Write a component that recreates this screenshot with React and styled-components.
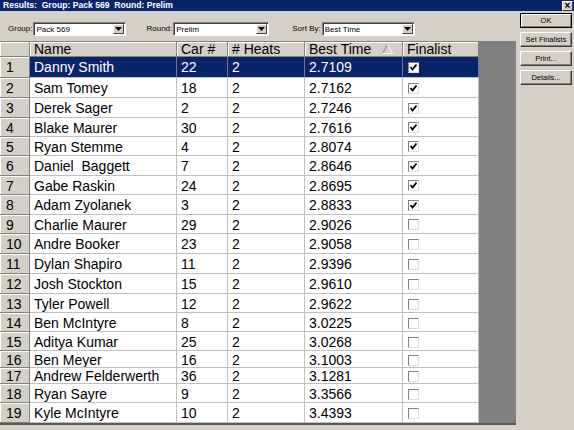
import React from "react";
import styled, { createGlobalStyle } from "styled-components";

const GlobalStyle = createGlobalStyle`
  html, body { margin: 0; padding: 0; background: #d4d0c8; }
  body { font-family: "Liberation Sans", Arial, sans-serif; }
  * { box-sizing: border-box; }
`;

const Window = styled.div`
  width: 574px;
  height: 430px;
  display: flex;
  flex-direction: column;
  background: #d4d0c8;
  overflow: hidden;
`;

const TitleBar = styled.div`
  height: 11px;
  background: #0a246a;
  color: #fff;
  display: flex;
  align-items: center;
  justify-content: space-between;
  padding: 0 1px 0 3px;
`;

const TitleText = styled.span`
  font-weight: bold;
  font-size: 8.6px;
  line-height: 11px;
  white-space: pre;
`;

const CloseBtn = styled.div`
  width: 11px;
  height: 10px;
  background: #d4d0c8;
  border: 1px solid;
  border-color: #fff #404040 #404040 #fff;
  color: #000;
  font-size: 10px;
  font-weight: bold;
  line-height: 7px;
  text-align: center;
`;

const Body = styled.div`
  flex: 1;
  display: flex;
  min-height: 0;
`;

const Main = styled.div`
  width: 516px;
  display: flex;
  flex-direction: column;
`;

const Toolbar = styled.div`
  height: 30px;
  display: flex;
  align-items: flex-start;
  padding: 11px 0 0 8px;
`;

const Field = styled.div`
  display: flex;
  align-items: center;
  margin-right: ${(p) => p.$gap}px;
`;

const Label = styled.span`
  font-size: 8px;
  color: #000;
  margin-right: 1px;
  line-height: 14px;
`;

const Combo = styled.div`
  width: ${(p) => p.$w}px;
  height: 14px;
  background: #fff;
  border: 1px solid;
  border-color: #808080 #fff #fff #808080;
  box-shadow: inset 1px 1px 0 #404040;
  display: flex;
  align-items: center;
  justify-content: space-between;
  padding: 1px 1px 1px 2px;
`;

const ComboText = styled.span`
  font-size: 8px;
  line-height: 11px;
  color: #000;
`;

const ComboArrow = styled.div`
  width: 11px;
  height: 10px;
  background: #d4d0c8;
  border: 1px solid;
  border-color: #fff #404040 #404040 #fff;
  display: flex;
  align-items: center;
  justify-content: center;
`;

const Grid = styled.div`
  height: 384px;
  background: #808080;
  border-top: 1px solid #808080;
  border-bottom: 2px solid #5a5a5a;
  display: flex;
  flex-direction: column;
  overflow: hidden;
`;

const cols = "30px 147px 51px 77px 98px 76px";

const HeaderRow = styled.div`
  display: grid;
  grid-template-columns: ${cols};
  height: 15px;
`;

const HeadCell = styled.div`
  background: #d4d0c8;
  border-right: 1px solid #808080;
  border-bottom: 1px solid #808080;
  box-shadow: inset 1px 1px 0 #fff;
  font-size: 14px;
  line-height: 15px;
  padding: 0 0 0 4px;
  color: #000;
  white-space: pre;
  overflow: hidden;
  position: relative;
`;

const SortMark = styled.svg`
  position: absolute;
  right: 9px;
  top: 2px;
`;

const DataRow = styled.div`
  display: grid;
  grid-template-columns: ${cols};
  height: ${(p) => p.$h}px;
`;

const RowHead = styled.div`
  background: #d4d0c8;
  border-right: 1px solid #808080;
  border-bottom: 1px solid #808080;
  box-shadow: inset 1px 1px 0 #fff;
  font-size: 14px;
  line-height: 17px;
  padding: ${(p) => p.$pt}px 0 0 6px;
  color: #000;
  overflow: hidden;
`;

const Cell = styled.div`
  background: ${(p) => (p.$sel ? "#0a246a" : "#fff")};
  color: ${(p) => (p.$sel ? "#fff" : "#000")};
  border-right: 1px solid ${(p) => (p.$sel ? "#6a78a0" : "#c0c0c0")};
  border-bottom: 1px solid #c0c0c0;
  font-size: 14px;
  line-height: 17px;
  padding: ${(p) => p.$pt}px 0 0 4px;
  white-space: pre;
  overflow: hidden;
`;

const CheckCell = styled(Cell)`
  display: flex;
  align-items: center;
  padding: 2px 0 0 5px;
`;

const Box = styled.div`
  width: 11px;
  height: 11px;
  background: #fff;
  border: 1px solid;
  border-color: #808080 #e0e0e0 #e0e0e0 #808080;
  display: flex;
  align-items: center;
  justify-content: center;
`;

const Side = styled.div`
  flex: 1;
  display: flex;
  flex-direction: column;
  gap: 4px;
  padding: 2px 2px 0 4px;
`;

const Button = styled.div`
  height: 15px;
  width: 52px;
  background: #d4d0c8;
  border: 1px solid;
  border-color: ${(p) => (p.$def ? "#000" : "#fff #404040 #404040 #fff")};
  box-shadow: ${(p) =>
    p.$def ? "inset 1px 1px 0 #fff, inset -1px -1px 0 #808080" : "inset -1px -1px 0 #808080"};
  font-size: 7.5px;
  line-height: 13px;
  text-align: center;
  color: #000;
  white-space: nowrap;
`;

const rows = [
  ["Danny Smith", "22", "2.7109", true, 21],
  ["Sam Tomey", "18", "2.7162", true, 20],
  ["Derek Sager", "2", "2.7246", true, 20],
  ["Blake Maurer", "30", "2.7616", true, 19],
  ["Ryan Stemme", "4", "2.8074", true, 19],
  ["Daniel  Baggett", "7", "2.8646", true, 20],
  ["Gabe Raskin", "24", "2.8695", true, 19],
  ["Adam Zyolanek", "3", "2.8833", true, 20],
  ["Charlie Maurer", "29", "2.9026", false, 19],
  ["Andre Booker", "23", "2.9058", false, 20],
  ["Dylan Shapiro", "11", "2.9396", false, 20],
  ["Josh Stockton", "15", "2.9610", false, 21],
  ["Tyler Powell", "12", "2.9622", false, 19],
  ["Ben McIntyre", "8", "3.0225", false, 19],
  ["Aditya Kumar", "25", "3.0268", false, 19],
  ["Ben Meyer", "16", "3.1003", false, 17],
  ["Andrew Felderwerth", "36", "3.1281", false, 16],
  ["Ryan Sayre", "9", "3.3566", false, 19],
  ["Kyle McIntyre", "10", "3.4393", false, 20],
];

const Arrow = () => (
  <svg width="7" height="4" viewBox="0 0 7 4">
    <polygon points="0,0 7,0 3.5,4" fill="#000" />
  </svg>
);

const Check = () => (
  <svg width="9" height="9" viewBox="0 0 9 9">
    <polyline points="1.5,4 3.5,6.5 7.5,1.5" fill="none" stroke="#000" strokeWidth="1.8" />
  </svg>
);

const ComboBox = ({ w, value }) => (
  <Combo $w={w}>
    <ComboText>{value}</ComboText>
    <ComboArrow>
      <Arrow />
    </ComboArrow>
  </Combo>
);

export default function App() {
  return (
    <>
      <GlobalStyle />
      <Window>
        <TitleBar>
          <TitleText>{"Results:  Group: Pack 569  Round: Prelim"}</TitleText>
          <CloseBtn>×</CloseBtn>
        </TitleBar>
        <Body>
          <Main>
            <Toolbar>
              <Field $gap={20}>
                <Label>Group:</Label>
                <ComboBox w={93} value="Pack 569" />
              </Field>
              <Field $gap={23}>
                <Label>Round:</Label>
                <ComboBox w={96} value="Prelim" />
              </Field>
              <Field $gap={0}>
                <Label>Sort By:</Label>
                <ComboBox w={93} value="Best Time" />
              </Field>
            </Toolbar>
            <Grid>
              <HeaderRow>
                <HeadCell />
                <HeadCell>Name</HeadCell>
                <HeadCell>Car #</HeadCell>
                <HeadCell># Heats</HeadCell>
                <HeadCell>
                  Best Time
                  <SortMark width="11" height="10" viewBox="0 0 11 10">
                    <line x1="5.5" y1="0.5" x2="0.5" y2="9.5" stroke="#808080" />
                    <line x1="5.5" y1="0.5" x2="10.5" y2="9.5" stroke="#fff" />
                    <line x1="0.5" y1="9.5" x2="10.5" y2="9.5" stroke="#fff" />
                  </SortMark>
                </HeadCell>
                <HeadCell>Finalist</HeadCell>
              </HeaderRow>
              {rows.map(([name, car, time, fin, h], i) => {
                const sel = i === 0;
                const pt = h < 17 ? 0 : h < 18 ? 1 : 2;
                return (
                  <DataRow key={i} $h={h}>
                    <RowHead $pt={pt}>{i + 1}</RowHead>
                    <Cell $sel={sel} $pt={pt}>{name}</Cell>
                    <Cell $sel={sel} $pt={pt}>{car}</Cell>
                    <Cell $sel={sel} $pt={pt}>2</Cell>
                    <Cell $sel={sel} $pt={pt}>{time}</Cell>
                    <CheckCell $sel={sel} $pt={pt}>
                      <Box>{fin && <Check />}</Box>
                    </CheckCell>
                  </DataRow>
                );
              })}
            </Grid>
          </Main>
          <Side>
            <Button $def>OK</Button>
            <Button>Set Finalists</Button>
            <Button>Print...</Button>
            <Button>Details...</Button>
          </Side>
        </Body>
      </Window>
    </>
  );
}
